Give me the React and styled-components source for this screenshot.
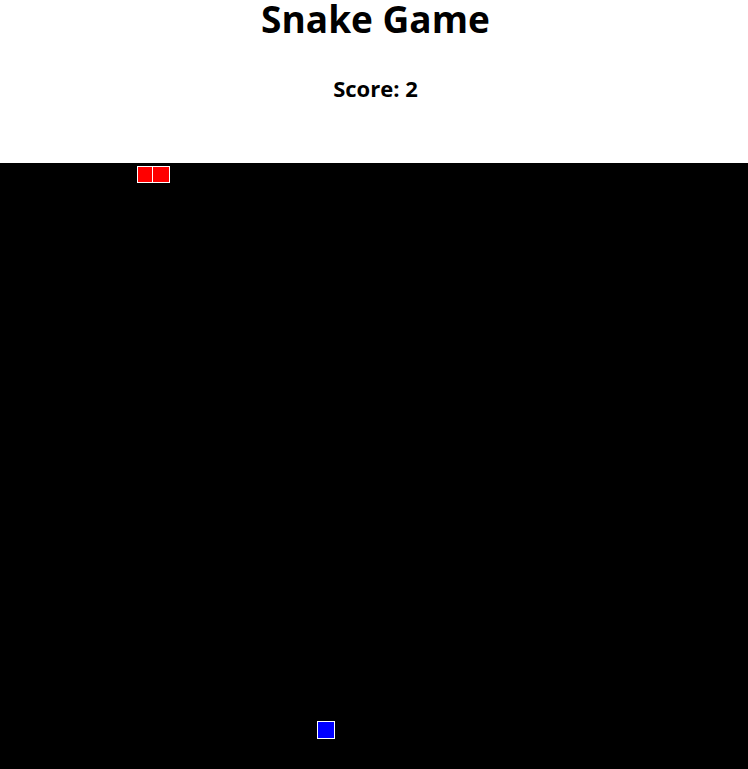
import React from "react";
import styled, { createGlobalStyle } from "styled-components";

const Global = createGlobalStyle`
  html, body { margin: 0; padding: 0; overflow: hidden; background: #fff; }
  body { font-family: "Open Sans", "Noto Sans", sans-serif; color: #000; }
`;

const Page = styled.div`
  display: flex;
  flex-direction: column;
  width: 100%;
`;

const Header = styled.header`
  display: flex;
  flex-direction: column;
  align-items: center;
  box-sizing: border-box;
  height: 163px;
  padding-left: 3px;
`;

const Title = styled.h1`
  margin: 0;
  font-size: 37px;
  line-height: 37px;
  font-weight: 700;
`;

const Score = styled.h2`
  margin: 40px 0 0;
  font-size: 22px;
  line-height: 22px;
  font-weight: 700;
`;

const Board = styled.div`
  position: relative;
  width: 100%;
  height: 606px;
  background: #000;
`;

const Cell = styled.div`
  position: absolute;
  box-sizing: border-box;
  border: 1px solid #fff;
  background: ${(p) => p.$color};
`;

const snake = [
  { x: 137, y: 3, w: 16, h: 17 },
  { x: 152, y: 3, w: 18, h: 17 },
];
const food = { x: 317, y: 558, w: 18, h: 18 };

export default function App() {
  return (
    <Page>
      <Global />
      <Header>
        <Title>Snake Game</Title>
        <Score>Score: 2</Score>
      </Header>
      <Board>
        {snake.map((s, i) => (
          <Cell
            key={i}
            $color="#ff0000"
            style={{ left: s.x, top: s.y, width: s.w, height: s.h }}
          />
        ))}
        <Cell
          $color="#0000ff"
          style={{ left: food.x, top: food.y, width: food.w, height: food.h }}
        />
      </Board>
    </Page>
  );
}
